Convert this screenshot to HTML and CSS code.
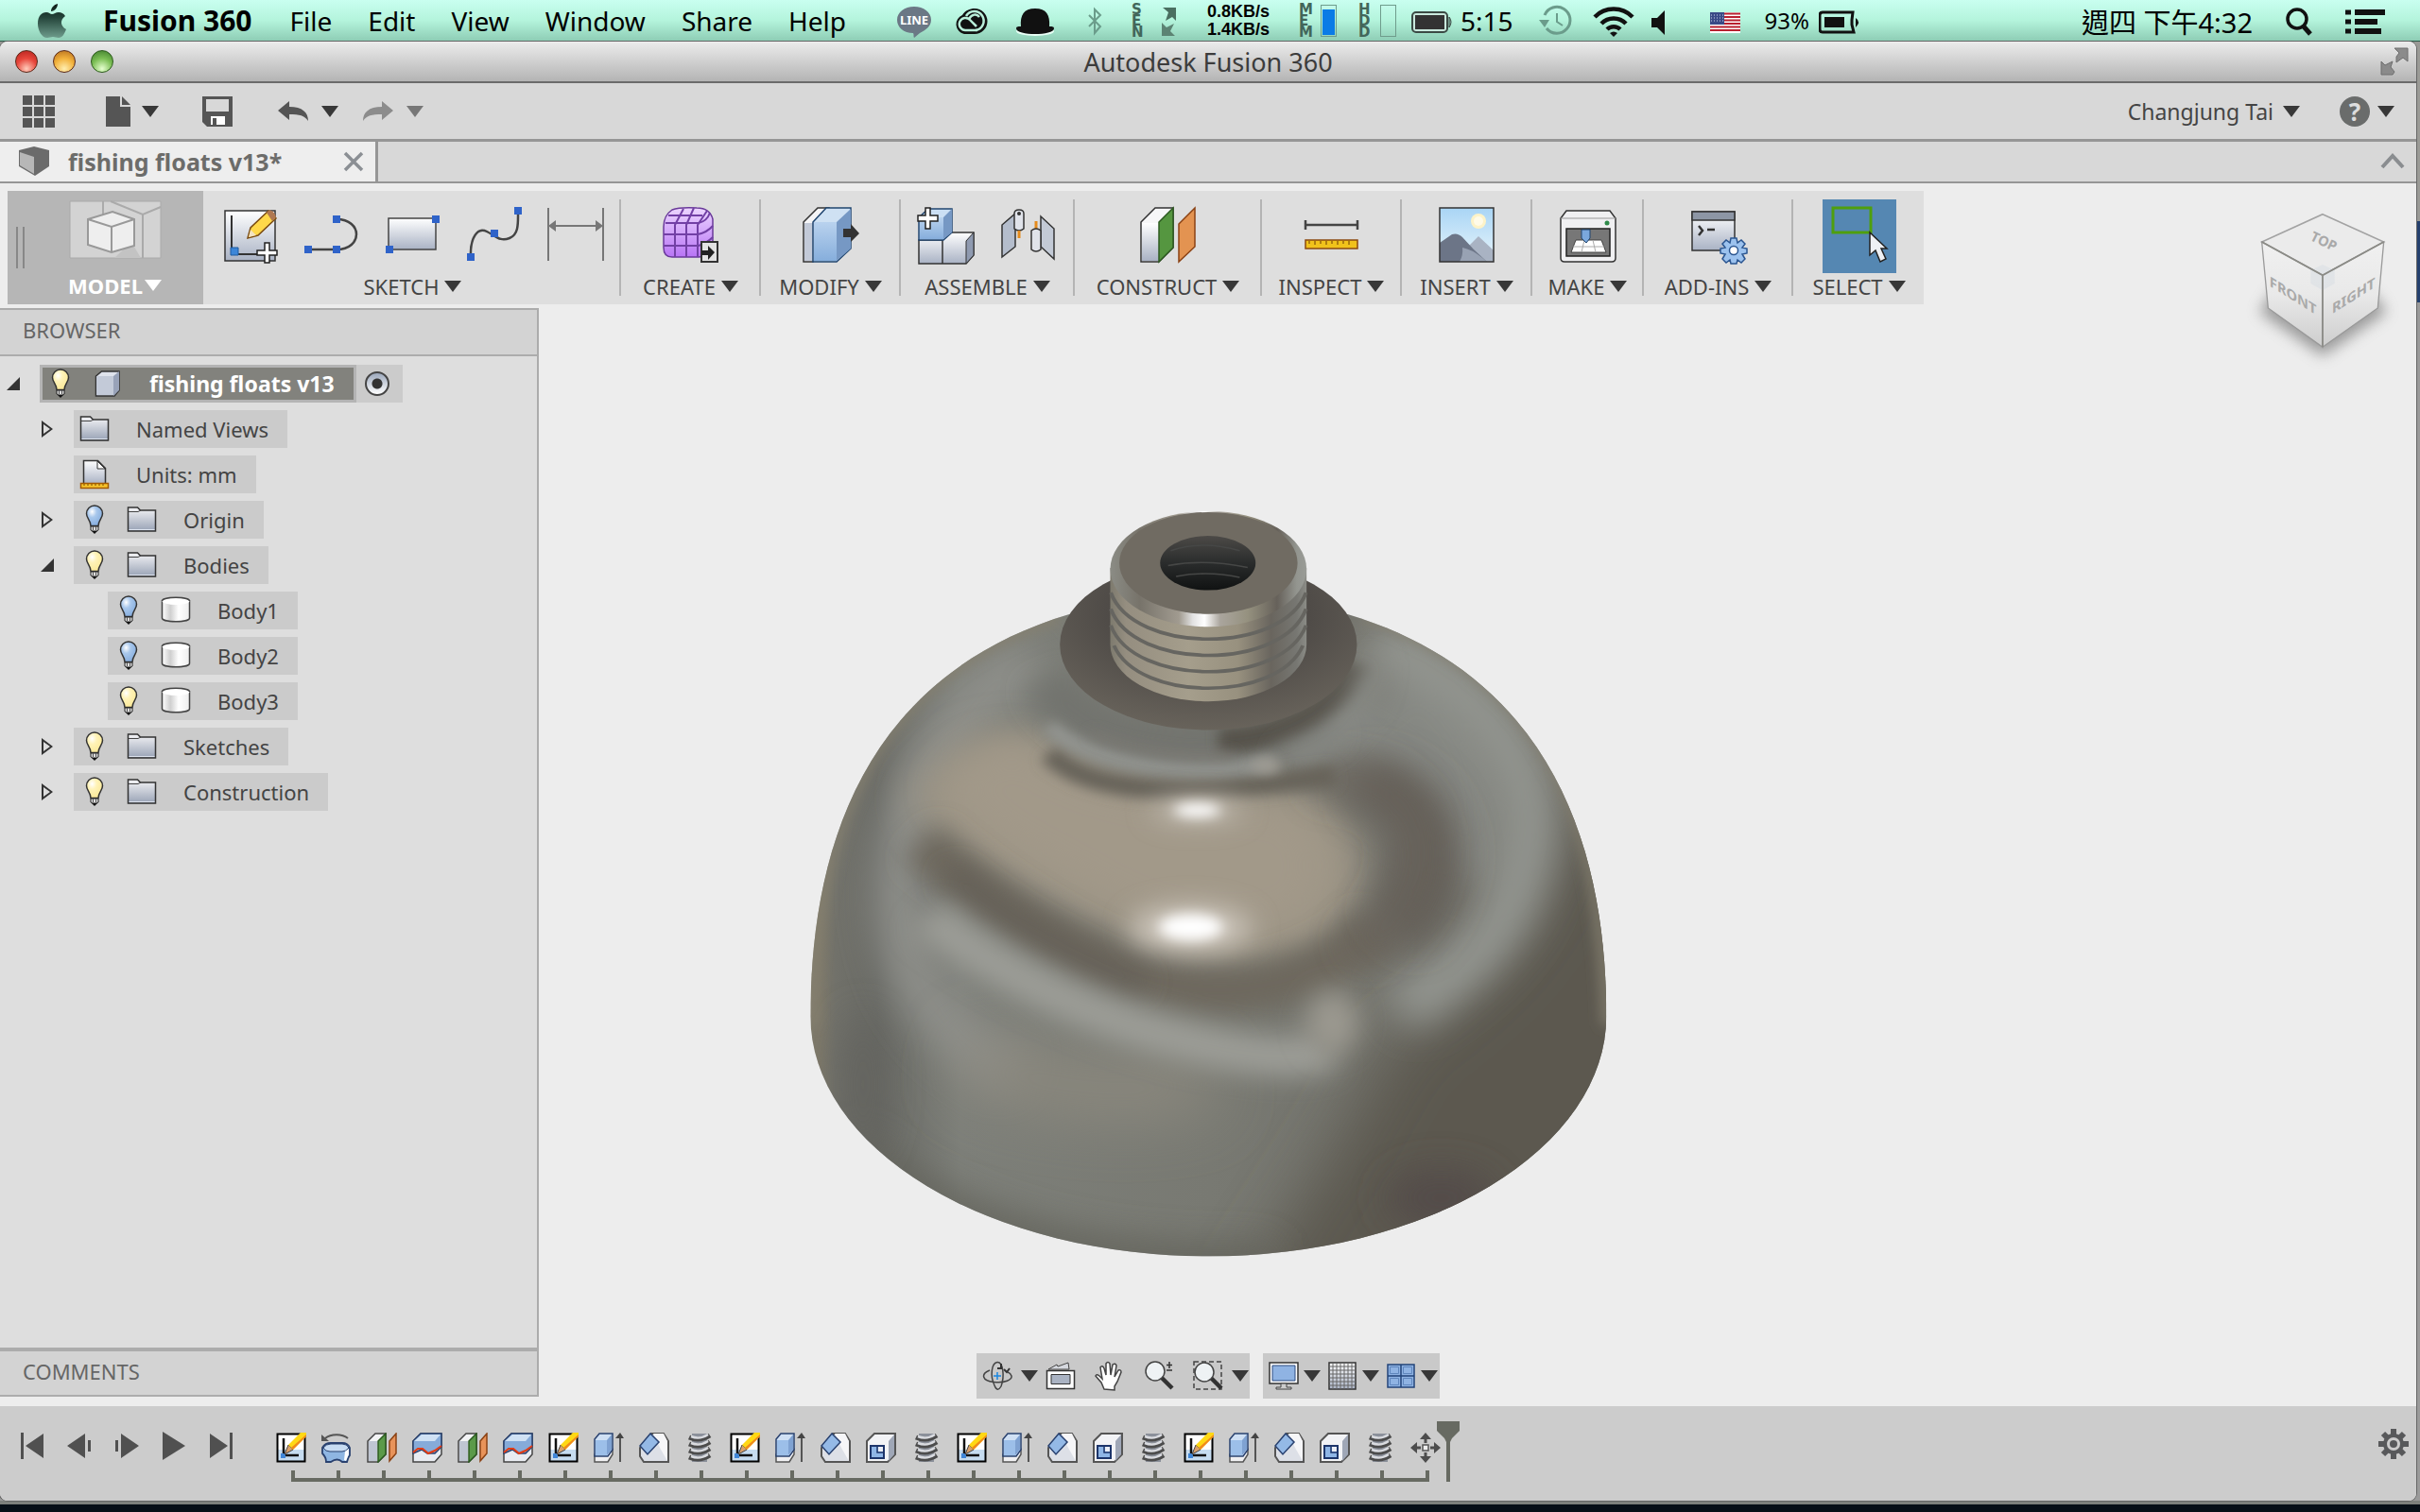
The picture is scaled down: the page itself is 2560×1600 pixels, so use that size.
FILE: index.html
```html
<!DOCTYPE html>
<html lang="en">
<head>
    <meta charset="UTF-8">
    <meta name="viewport" content="width=device-width, initial-scale=1.0">
    <title>Autodesk Fusion 360</title>
    <link rel="stylesheet" href="styles.css">
</head>
<body>

    <!-- shared icons -->
    <svg class="sprite" width="0" height="0" aria-hidden="true">
        <defs>
            <linearGradient id="steel" x1="0" y1="0" x2="0" y2="1"><stop offset="0" stop-color="#fff"/><stop offset="1" stop-color="#a9b2c4"/></linearGradient>
            <linearGradient id="folderFill" x1="0" y1="0" x2="0" y2="1"><stop offset="0" stop-color="#f4f4f6"/><stop offset="1" stop-color="#98a2b5"/></linearGradient>
            <linearGradient id="blue" x1="0" y1="0" x2="0" y2="1"><stop offset="0" stop-color="#b9d2ee"/><stop offset="1" stop-color="#86aedc"/></linearGradient>
            <linearGradient id="violet" x1="0" y1="0" x2="0" y2="1"><stop offset="0" stop-color="#ecd6ff"/><stop offset="1" stop-color="#b874f5"/></linearGradient>
            <linearGradient id="sky" x1="0" y1="0" x2="0" y2="1"><stop offset="0" stop-color="#a9d5f5"/><stop offset="1" stop-color="#e8f5fb"/></linearGradient>
            <linearGradient id="can" x1="0" y1="0" x2="1" y2="0"><stop offset="0" stop-color="#fff"/><stop offset=".3" stop-color="#cfcfcf"/><stop offset=".6" stop-color="#fff"/><stop offset="1" stop-color="#eee"/></linearGradient>
            <radialGradient id="bulbOn" cx=".35" cy=".3" r=".7"><stop offset="0" stop-color="#fff"/><stop offset=".4" stop-color="#fff3b8"/><stop offset="1" stop-color="#fbe999"/></radialGradient>
            <radialGradient id="bulbOff" cx=".35" cy=".3" r=".7"><stop offset="0" stop-color="#fff"/><stop offset=".4" stop-color="#a9c8ec"/><stop offset="1" stop-color="#87aede"/></radialGradient>
            <linearGradient id="appleFill" x1="0" y1="0" x2="0" y2="1"><stop offset="0" stop-color="#0c1a15"/><stop offset=".4" stop-color="#24443a"/><stop offset="1" stop-color="#6e9c8c"/></linearGradient>
        </defs>

        <symbol id="i-bulb-on" viewBox="0 0 20 32"><path d="M10 1a8.500 8.500 0 0 0-8.500 8.500c0 5 4.500 7 4.500 13h8c0-6 4.500-8 4.500-13A8.500 8.500 0 0 0 10 1z" fill="url(#bulbOn)" stroke="#333" stroke-width="1.500"/><path d="M6 23h8v4l-2 1h-4l-2-1z" fill="#ddd" stroke="#222"/><path d="M8.500 23v4M11.500 23v4" stroke="#555"/><path d="M7 28h6l-3 3z" fill="#111"/></symbol>
        <symbol id="i-bulb-off" viewBox="0 0 20 32"><path d="M10 1a8.500 8.500 0 0 0-8.500 8.500c0 5 4.500 7 4.500 13h8c0-6 4.500-8 4.500-13A8.500 8.500 0 0 0 10 1z" fill="url(#bulbOff)" stroke="#333" stroke-width="1.500"/><path d="M6 23h8v4l-2 1h-4l-2-1z" fill="#ddd" stroke="#222"/><path d="M8.500 23v4M11.500 23v4" stroke="#555"/><path d="M7 28h6l-3 3z" fill="#111"/></symbol>
        <symbol id="i-folder" viewBox="0 0 32 32"><path d="M1.500 28V3h10l3 3h16v22z" fill="url(#folderFill)" stroke="#333" stroke-width="1.500"/><path d="M2 7.500h10l3-1.500" fill="none" stroke="#444"/><path d="M2.500 26.500h27" stroke="#dde3ee"/></symbol>
        <symbol id="i-units" viewBox="0 0 32 32"><path d="M4.500 26V1.500h15l8 8V26z" fill="url(#steel)" stroke="#333" stroke-width="1.500"/><path d="M19 2v8h8z" fill="#fff" stroke="#333"/><path d="M1.500 25.500h29v5h-29z" fill="#f6c32b" stroke="#a35a00" stroke-width="1.500"/><path d="M5 26v2M9 26v2M13 26v2M17 26v2M21 26v2M25 26v2" stroke="#7a4a00"/></symbol>
        <symbol id="i-body" viewBox="0 0 32 32"><path d="M1.500 6v18c0 5 29 5 29 0V6z" fill="url(#can)" stroke="#444" stroke-width="1.500"/><ellipse cx="16" cy="6" rx="14.500" ry="4" fill="#fff"/><path d="M1.500 6c0-5 29-5 29 0" fill="none" stroke="#444" stroke-width="1.500"/></symbol>
        <symbol id="i-component" viewBox="0 0 32 32"><path d="M3.500 8l6-5h18.500v20l-5 6H3.500z" fill="#dfe3ec" stroke="#333" stroke-width="1.500"/><path d="M4 8h18v20H4z" fill="#c3cad8"/><path d="M22 8l6-5v20l-6 6z" fill="#98a2b8"/></symbol>

        <symbol id="i-fx-sketch" viewBox="0 0 32 32"><path d="M1.500 1.500h29v29h-29z" fill="#fff"/><path d="M2 18h28v12H2z" fill="#c6dcf0"/><path d="M1.500 1.500h29v29h-29z" fill="none" stroke="#000" stroke-width="2"/><path d="M8 6v18h16" fill="none" stroke="#111" stroke-width="2.500"/><path d="M5 22h5v5H5z" fill="#3f86d8"/><path d="M9 23l4-10 5 5z" fill="#d9a06a" stroke="#444"/><path d="M13 13L26 0h6v4L18 18z" fill="#ffd814"/><path d="M18 18L32 4v-2L16 16z" fill="#f08a1c"/></symbol>
        <symbol id="i-fx-revolve" viewBox="0 0 32 32"><path d="M4 6C10 1 22 1 28 6" fill="none" stroke="#555" stroke-width="2"/><path d="M0 2v7h8z" fill="#555"/><path d="M1 16q3-5 9-5h12q6 0 8 5v8q-2 2-3 7h-5q-5-5-12 0H5q0-5-4-9z" fill="#8fb6e2" stroke="#29416f" stroke-width="1.800"/><path d="M2 16q3-4 8-4h12q5 0 7 4-3 4-7 4H9q-5 0-7-4z" fill="#c7dcf3" stroke="#29416f"/><path d="M25 20l4-3v6l-3 7-2-1z" fill="#fff"/></symbol>
        <symbol id="i-fx-plane" viewBox="0 0 32 32"><path d="M1 9l8-8h11v22l-8 8H1z" fill="#f2f3f5" stroke="#444" stroke-width="1.500"/><path d="M2 9h9v21H2z" fill="#bfc6d2"/><path d="M12 9l8-8v22l-8 8z" fill="#5b9a49" stroke="#2b5a20" stroke-width="1.500"/><path d="M24 9l7-8v21l-7 8z" fill="#e8935a" stroke="#8b4214" stroke-width="1.500"/></symbol>
        <symbol id="i-fx-split" viewBox="0 0 32 32"><path d="M1 9l8-8h22v22l-7 8H1z" fill="#e9ecf2" stroke="#444" stroke-width="1.500"/><path d="M1 9l8-8h22v14l-7 7-8 0-6-4-9 4z" fill="#86abd9" stroke="#29416f" stroke-width="1.500"/><path d="M2 9l8-7h20l-6 7z" fill="#cfe1f4"/><path d="M1 21l5-4h5l6 5 7-3 7-5" fill="none" stroke="#e23b14" stroke-width="2"/></symbol>
        <symbol id="i-fx-extrude" viewBox="0 0 32 32"><path d="M1 23h14l5-5v5l-5 8H1z" fill="#f0f0f2" stroke="#555" stroke-width="1.500"/><path d="M1 7l5-6h14v17l-5 7H1z" fill="#cfe0f4" stroke="#29416f" stroke-width="1.500"/><path d="M2 8h12v16H2z" fill="#9cbfe9"/><path d="M14 8l5-6v16l-5 6z" fill="#7fa2d2"/><path d="M28 5v26" stroke="#555" stroke-width="2"/><path d="M23 6l5-6 4 6z" fill="#444"/></symbol>
        <symbol id="i-fx-chamfer" viewBox="0 0 32 32"><path d="M1 16L13 1h13l5 8v22H5l-4-6z" fill="#dde0e7" stroke="#555" stroke-width="2"/><path d="M15 1h11l4 8v21l-8-14z" fill="#f6f6f8"/><path d="M1 14L12 1l9 9L9 23z" fill="#94b9e6" stroke="#29416f" stroke-width="1.500"/></symbol>
        <symbol id="i-fx-thread" viewBox="0 0 32 32"><path d="M8 1h16v30H8z" fill="#8b909a"/><path d="M5 5q11 5 22-2M5 12q11 5 22-2M5 19q11 5 22-2M5 26q11 5 22-2" fill="none" stroke="#4c4c4c" stroke-width="5"/><path d="M7 4q9 4 18-2M7 11q9 4 18-2M7 18q9 4 18-2M7 25q9 4 18-2" fill="none" stroke="#d9dbe0" stroke-width="2.500"/></symbol>
        <symbol id="i-fx-shell" viewBox="0 0 32 32"><path d="M1 9l8-8h22v22l-8 8H1z" fill="#f2f3f6" stroke="#555" stroke-width="2"/><path d="M24 9l6-7v21l-6 7z" fill="#9fa7b7"/><path d="M5 14h14v13H5z" fill="#8fb6e6" stroke="#1d356b" stroke-width="2"/><path d="M12 14v7h7" fill="none" stroke="#1d356b" stroke-width="1.500"/><path d="M13 15h5v5h-5z" fill="#e9edf5"/></symbol>
        <symbol id="i-fx-move" viewBox="0 0 32 32"><g fill="#4d4d4d"><path d="M16 0l6 7H10zM16 32l6-7H10zM0 16l7-6v12zM32 16l-7-6v12z"/><path d="M14.500 6h3v5h-3zM14.500 21h3v5h-3zM6 14.500h5v3H6zM21 14.500h5v3h-5z"/></g><rect x="13" y="13" width="6" height="6" fill="#eee" stroke="#555" stroke-width="1.500"/></symbol>
    </svg>

    <header class="menubar">
        <nav class="menus">
            <button class="apple" aria-label="Apple menu"><svg width="32" height="36" viewBox="0 0 32 36"><path d="M22 0c0 4-3 8-7 8 0-4 3-7 7-8zM16 11c2 0 4-2 7-2s5 1 7 4c-6 4-5 11 1 14-2 5-4 9-8 9-2 0-4-1-6-1s-4 1-6 1C5 36 1 28 1 21c0-8 4-12 9-12 3 0 4 2 6 2z" fill="url(#appleFill)"/></svg></button>
            <button class="app-name">Fusion 360</button>
            <button>File</button>
            <button>Edit</button>
            <button>View</button>
            <button>Window</button>
            <button>Share</button>
            <button>Help</button>
        </nav>
        <div class="status">
            <svg width="60" height="40" viewBox="0 0 60 40"><path d="M26 5c10 0 18 6 18 14 0 7-6 11-12 14l-6 5c-1-2 0-3-1-5C15 33 8 27 8 19 8 11 16 5 26 5z" fill="#6b7885"/><text x="26" y="24" class="line-text">LINE</text></svg>
            <svg width="60" height="40" viewBox="0 0 60 40"><path d="M19 34a10.500 10.500 0 0 1-2-20C20 9 25 7 30 7a13.500 13.500 0 0 1 0 27z" fill="#111"/><g fill="none" stroke="#b9efda" stroke-width="2.500"><path d="M33 30h-13a6.500 6.500 0 1 1 5-11l7 7"/><path d="M21 15a10 10 0 1 1 10 15M24 18c3-5 8-6 11-2"/></g></svg>
            <svg width="70" height="40" viewBox="0 0 70 40"><ellipse cx="34" cy="31" rx="20" ry="5" fill="#e9fff6"/><path d="M14 28c0-2 3-2 5-2C18 14 22 7 34 7s16 7 15 19c2 0 5 0 5 2 0 8-40 8-40 0z" fill="#111"/></svg>
            <svg width="54" height="40" viewBox="0 0 54 40"><path d="M21 14l12 12-6 7V8l6 6-12 12" fill="none" stroke="#6b9c8b" stroke-width="2"/></svg>
            <span class="stack sen"><b>S</b><b>E</b><b>N</b></span>
            <svg width="56" height="40" viewBox="0 0 56 40"><path d="M9 6h14v14l-4-4-7 4 3-9z" fill="#4a6e60"/><path d="M8 36V22l5 5 8-4-4 8 5 5z" fill="#5c8373"/></svg>
            <span class="net"><b>0.8KB/s</b><b>1.4KB/s</b></span>
            <span class="stack"><b>M</b><b>E</b><b>M</b></span>
            <span class="meter"><i></i></span>
            <span class="stack"><b>H</b><b>D</b><b>D</b></span>
            <span class="meter empty"></span>
            <svg width="52" height="40" viewBox="0 0 52 40"><rect x="1" y="11" width="37" height="21" rx="4" fill="#c9e9dd" stroke="#3b4a44" stroke-width="2"/><rect x="4" y="14" width="31" height="15" fill="#333"/><path d="M40 16q4 5 0 11z" fill="#8cb5a6" stroke="#3b4a44"/></svg>
            <span>5:15</span>
            <svg width="84" height="40" viewBox="0 0 84 40"><path d="M33 14a14 14 0 1 1 2 14" fill="none" stroke="#6b9c8b" stroke-width="3"/><path d="M46 12v9l6 4" fill="none" stroke="#6b9c8b" stroke-width="2"/><path d="M27 19h11l-5 8z" fill="#6b9c8b"/></svg>
            <svg width="44" height="40" viewBox="0 0 44 40"><g fill="none" stroke="#111" stroke-width="4.500"><path d="M2 16a28 28 0 0 1 40 0M9 23a18 18 0 0 1 26 0M15 29a10 10 0 0 1 14 0"/></g><path d="M22 37l-4-4q4-3 8 0z" fill="#111"/></svg>
            <svg width="80" height="40" viewBox="0 0 80 40"><path d="M18 17h6l8-8v26l-8-8h-6z" fill="#111"/></svg>
            <svg width="58" height="40" viewBox="0 0 58 40"><path d="M0 11h32v22H0z" fill="#fff"/><path d="M0 12.500h32M0 16h32M0 19.500h32M0 23h32M0 26.500h32M0 30h32" stroke="#b8202f" stroke-width="1.900"/><path d="M0 11h15v13H0z" fill="#3a4a86"/><path d="M1 14h13M1 17h13M1 20h13" stroke="#cfd6ea" stroke-dasharray="1 2"/></svg>
            <span class="percent">93%</span>
            <svg class="battery" width="46" height="40" viewBox="0 0 46 40"><path d="M4 11h32l-1 8v5l2 8H4q-3 0-3-3V14q0-3 3-3z" fill="none" stroke="#111" stroke-width="3"/><path d="M6 16h21v11H6z" fill="#111"/><path d="M39 17q6 4 0 10z" fill="#111"/></svg>
            <span class="clock" lang="zh-Hant">週四 下午4:32</span>
            <svg width="64" height="40" viewBox="0 0 64 40"><circle cx="13" cy="18" r="10" fill="none" stroke="#111" stroke-width="3.500"/><path d="M19 25l8 9" stroke="#111" stroke-width="5"/></svg>
            <svg width="42" height="40" viewBox="0 0 42 40"><path d="M10 11h32M10 21h24M10 31h28" stroke="#111" stroke-width="6"/><path d="M0 11h6M0 21h6M0 31h6" stroke="#111" stroke-width="5"/></svg>
        </div>
    </header>

    <main class="window">
        <div class="titlebar">
            <div class="lights">
                <button class="light red" aria-label="Close"></button>
                <button class="light amber" aria-label="Minimize"></button>
                <button class="light green" aria-label="Zoom"></button>
            </div>
            <h1>Autodesk Fusion 360</h1>
            <button class="fullscreen" aria-label="Full screen"><svg width="30" height="30" viewBox="0 0 30 30"><path d="M15 1h14v14l-5-4-7 5 0-6 3-4zM1 29V15l4 4 8-4-2 6 4 5-2 3z" fill="#8b8b8b" stroke="#6e6e6e"/></svg></button>
        </div>

        <div class="appbar">
            <button class="grid-btn" aria-label="Data panel"><svg width="34" height="34" viewBox="0 0 34 34"><path d="M0 0h10v10H0zM12 0h10v10H12zM24 0h10v10H24zM0 12h10v10H0zM12 12h10v10H12zM24 12h10v10H24zM0 24h10v10H0zM12 24h10v10H12zM24 24h10v10H24z" fill="#555"/></svg></button>
            <button class="file-btn" aria-label="File"><svg width="26" height="32" viewBox="0 0 26 32"><path d="M0 0h15v11h11v21H0z" fill="#555"/><path d="M17 0l9 9h-9z" fill="#555"/></svg><span class="caret"></span></button>
            <button class="save-btn" aria-label="Save"><svg width="32" height="32" viewBox="0 0 32 32"><path d="M0 0h32v32H5l-5-5z" fill="#555"/><path d="M4 3h24v13H4z" fill="#d8d8d8"/><path d="M9 21h15v9H9z" fill="#fff"/><path d="M11 23h4v7h-4z" fill="#555"/></svg></button>
            <button class="undo-btn" aria-label="Undo"><svg width="34" height="24" viewBox="0 0 34 24"><path d="M0 11L12 1v6c14 0 20 6 20 15-4-6-9-7-20-7v6z" fill="#555"/></svg><span class="caret"></span></button>
            <button class="redo-btn" aria-label="Redo"><svg width="34" height="24" viewBox="0 0 34 24"><path d="M34 11L22 1v6C8 7 2 13 2 22c4-6 9-7 20-7v6z" fill="#8c8c8c"/></svg><span class="caret"></span></button>
            <button class="user-btn">Changjung Tai<span class="caret"></span></button>
            <button class="help-btn" aria-label="Help"><span class="help-mark">?</span><span class="caret"></span></button>
        </div>

        <div class="tabs">
            <div class="tab">
                <svg width="34" height="32" viewBox="0 0 34 32"><path d="M1 4L17 0l16 4v17L18 31 1 21z" fill="#6b6b6b"/><path d="M2 6l15 5v18L2 20z" fill="#b7b7b7"/></svg>
                <span>fishing floats v13*</span>
                <button aria-label="Close tab"><svg width="22" height="22" viewBox="0 0 22 22"><path d="M2 2l18 18M20 2L2 20" stroke="#8b8f94" stroke-width="3.500"/></svg></button>
            </div>
            <button class="collapse" aria-label="Collapse"><svg width="26" height="18" viewBox="0 0 26 18"><path d="M2 15L13 3l11 12" fill="none" stroke="#8a8d90" stroke-width="4"/></svg></button>
        </div>

        <section class="workspace">
            <!-- rendered part -->
            <svg class="model" width="880" height="820" viewBox="0 0 1568 1568" preserveAspectRatio="none" role="img" aria-label="fishing float">
                <defs>
                    <clipPath id="dome"><path d="M31 1063C31 760 110 380 520 248H1042C1452 380 1531 760 1531 1063A750 485 0 0 1 31 1063z"/></clipPath>
                    <filter id="b5" filterUnits="userSpaceOnUse" x="-200" y="-200" width="2000" height="2000"><feGaussianBlur stdDeviation="6"/></filter>
                    <filter id="b10" filterUnits="userSpaceOnUse" x="-200" y="-200" width="2000" height="2000"><feGaussianBlur stdDeviation="12"/></filter>
                    <filter id="b20" filterUnits="userSpaceOnUse" x="-200" y="-200" width="2000" height="2000"><feGaussianBlur stdDeviation="25"/></filter>
                    <filter id="b30" filterUnits="userSpaceOnUse" x="-200" y="-200" width="2000" height="2000"><feGaussianBlur stdDeviation="36"/></filter>
                    <filter id="b50" filterUnits="userSpaceOnUse" x="-200" y="-200" width="2000" height="2000"><feGaussianBlur stdDeviation="60"/></filter>
                    <linearGradient id="baseFill" x1="0" y1="0" x2="1" y2="0"><stop offset="0" stop-color="#7e7a6b"/><stop offset=".03" stop-color="#7d7869"/><stop offset=".05" stop-color="#71716a"/><stop offset=".1" stop-color="#686964"/><stop offset=".2" stop-color="#7d7f79"/><stop offset=".5" stop-color="#787972"/><stop offset="1" stop-color="#6c6a63"/></linearGradient>
                    <radialGradient id="collarFill" cx=".5" cy=".3" r=".7"><stop offset="0" stop-color="#3f3c3b"/><stop offset=".5" stop-color="#504c48"/><stop offset="1" stop-color="#68635b"/></radialGradient>
                    <linearGradient id="neckFill" x1="0" y1="0" x2="1" y2="0"><stop offset="0" stop-color="#7d7a6e"/><stop offset=".08" stop-color="#958e80"/><stop offset=".4" stop-color="#a59e8c"/><stop offset=".65" stop-color="#98917f"/><stop offset=".82" stop-color="#69655e"/><stop offset=".95" stop-color="#777772"/><stop offset="1" stop-color="#8b8c86"/></linearGradient>
                    <linearGradient id="bevelFill" x1="0" y1="0" x2="1" y2="0"><stop offset="0" stop-color="#8b8c85"/><stop offset=".15" stop-color="#77736a"/><stop offset=".35" stop-color="#a19b90"/><stop offset=".42" stop-color="#e2e2e2"/><stop offset=".48" stop-color="#fff"/><stop offset=".56" stop-color="#aaa59d"/><stop offset=".7" stop-color="#95917f"/><stop offset=".85" stop-color="#66615a"/><stop offset=".95" stop-color="#93958f"/><stop offset="1" stop-color="#9a9c97"/></linearGradient>
                    <linearGradient id="holeFill" x1="0" y1="0" x2="0" y2="1"><stop offset="0" stop-color="#4c4a47"/><stop offset=".5" stop-color="#2a2c2c"/><stop offset="1" stop-color="#101212"/></linearGradient>
                </defs>
                <g clip-path="url(#dome)">
                    <path d="M0 200h1568v1368H0z" fill="url(#baseFill)"/>
                    <path d="M1130 1120C1250 1020 1430 900 1470 600L1700 600V1700H800C880 1560 1020 1350 1130 1120z" fill="#5c5850" filter="url(#b50)"/>
                    <ellipse cx="1220" cy="1430" rx="100" ry="60" fill="#534b48" filter="url(#b30)"/>
                    <path d="M100 1320C300 1500 560 1570 900 1560" fill="none" stroke="#64635c" stroke-width="70" filter="url(#b30)"/>
                    <ellipse cx="130" cy="1200" rx="40" ry="150" fill="#64635e" filter="url(#b30)"/>
                    <path d="M450 340C290 430 190 640 200 850C210 990 280 1110 420 1180" fill="none" stroke="#8f908b" stroke-width="90" filter="url(#b30)"/>
                    <path d="M330 1150C480 1210 640 1230 780 1190" fill="none" stroke="#8b887e" stroke-width="120" filter="url(#b50)"/>
                    <path d="M960 520C1080 480 1150 430 1160 380C1320 480 1340 680 1280 800" fill="#858782" stroke="#858782" stroke-width="70" filter="url(#b30)"/>
                    <path d="M1090 300C1330 400 1425 600 1370 770C1345 890 1260 970 1140 1050" fill="none" stroke="#939590" stroke-width="105" filter="url(#b30)"/>
                    <path d="M1075 250C1452 390 1520 700 1533 1080" fill="none" stroke="#858070" stroke-width="18" filter="url(#b10)"/>
                    <path d="M31 1080C31 760 110 380 500 255" fill="none" stroke="#858070" stroke-width="22" filter="url(#b10)"/>
                    <path d="M220 620C280 490 420 460 480 500C580 600 760 600 950 600C1110 660 1110 850 980 930C840 980 700 960 560 880C420 800 280 760 220 620z" fill="#9c9485" filter="url(#b30)"/>
                    <path d="M280 600C350 500 420 490 470 530C600 620 780 630 930 630C1020 690 1030 800 950 870C800 920 640 870 540 800C440 740 340 700 280 600z" fill="#a29989" filter="url(#b30)"/>
                    <path d="M240 710C390 850 560 960 720 1000C860 1030 1010 980 1100 880" fill="none" stroke="#6d685d" stroke-width="92" filter="url(#b20)"/>
                    <path d="M290 770C400 870 540 950 660 1000" fill="none" stroke="#645e57" stroke-width="44" filter="url(#b20)"/>
                    <path d="M1060 590C1230 610 1230 790 1130 890" fill="none" stroke="#625d56" stroke-width="110" filter="url(#b30)"/>
                    <path d="M990 580C1100 570 1180 630 1175 740C1170 820 1130 880 1060 930" fill="none" stroke="#67625a" stroke-width="60" filter="url(#b30)"/>
                    <path d="M250 860C400 990 600 1080 750 1115C880 1150 970 1150 1010 1130" fill="none" stroke="#9c9d97" stroke-width="80" filter="url(#b20)"/>
                    <ellipse cx="1015" cy="1075" rx="50" ry="65" fill="#9b9990" filter="url(#b20)"/>
                    <path d="M480 380C540 520 800 560 1010 460" fill="none" stroke="#72736e" stroke-width="90" filter="url(#b20)"/>
                    <path d="M800 505C920 500 1030 440 1060 350" fill="none" stroke="#57524b" stroke-width="52" filter="url(#b10)"/>
                    <path d="M920 545C1030 510 1090 420 1085 340" fill="none" stroke="#8b8d88" stroke-width="38" filter="url(#b20)"/>
                    <path d="M480 530C560 610 700 620 1020 575" fill="none" stroke="#67635a" stroke-width="42" filter="url(#b10)"/>
                    <path d="M480 475C560 555 750 582 905 548" fill="none" stroke="#959894" stroke-width="26" filter="url(#b10)"/>
                    <ellipse cx="890" cy="555" rx="28" ry="14" fill="#a19d94" filter="url(#b10)"/>
                    <path d="M560 490C640 525 740 540 830 535" fill="none" stroke="#7b7973" stroke-width="14" filter="url(#b10)"/>
                    <ellipse cx="760" cy="645" rx="85" ry="24" fill="#c3bdb3" filter="url(#b20)"/>
                    <ellipse cx="760" cy="645" rx="44" ry="14" fill="#fff" filter="url(#b10)"/>
                    <ellipse cx="748" cy="884" rx="115" ry="48" fill="#cbc4ba" filter="url(#b20)"/>
                    <ellipse cx="748" cy="882" rx="60" ry="27" fill="#fff" filter="url(#b10)"/>
                </g>
                <ellipse cx="781" cy="310" rx="280" ry="173" fill="url(#collarFill)"/>
                <path d="M596 155V310A185 115 0 0 0 966 310V155z" fill="url(#neckFill)"/>
                <path d="M597 205C640 330 922 330 965 205M597 238C640 363 922 363 965 238M597 271C640 396 922 396 965 271M603 312C650 427 912 427 959 312" fill="none" stroke="#666560" stroke-width="7"/>
                <ellipse cx="781" cy="157" rx="185" ry="117" fill="url(#bevelFill)"/>
                <ellipse cx="781" cy="145" rx="168" ry="103" fill="#706b62"/>
                <ellipse cx="780" cy="145" rx="90" ry="55" fill="url(#holeFill)"/>
                <path d="M710 120q60-22 130 0M705 150q70-14 150 4M720 172q60-12 120 2" fill="none" stroke="#464746" stroke-width="3"/>
            </svg>

            <!-- orientation cube -->
            <svg class="viewcube" width="200" height="200" viewBox="0 0 600 600" role="img" aria-label="View cube">
                <defs>
                    <linearGradient id="cubeFace" x1="0" y1="0" x2="0" y2="1"><stop offset="0" stop-color="#f0f0f0"/><stop offset=".5" stop-color="#e9e9e9"/><stop offset="1" stop-color="#cdcdcd"/></linearGradient>
                    <filter id="cubeShadow" filterUnits="userSpaceOnUse" x="0" y="0" width="600" height="600"><feGaussianBlur stdDeviation="22"/></filter>
                </defs>
                <path d="M90 390L291 530L495 390L440 320H140z" fill="#777" opacity=".7" filter="url(#cubeShadow)"/>
                <path d="M291 80L485 168L291 274L98 168z" fill="#ebebeb" stroke="#a3a3a3" stroke-width="5"/>
                <path d="M98 168L291 274V502L118 378z" fill="url(#cubeFace)" stroke="#9a9a9a" stroke-width="4"/>
                <path d="M485 168L291 274V502L466 378z" fill="url(#cubeFace)" stroke="#9a9a9a" stroke-width="4"/>
                <path d="M291 240l38 18v42l-38 22-38-22v-42z" fill="#d3dae0" opacity=".4"/>
                <path d="M98 168L291 274L485 168M291 274V502" fill="none" stroke="#8b8b86" stroke-width="5"/>
                <text class="cube-text" transform="translate(288 180) rotate(26)">TOP</text>
                <text class="cube-text" transform="translate(197 354) skewY(32)">FRONT</text>
                <text class="cube-text" transform="translate(389 354) skewY(-32)">RIGHT</text>
            </svg>

            <div class="toolbar">
                <button class="model-menu">
                    <span class="grip"></span>
                    <svg width="98" height="62" viewBox="0 0 98 62"><path d="M1 1h96v60H1z" fill="#d3d3d3" stroke="#aaa"/><path d="M36 1v14M44 1l34 14 19-8M78 15v46" fill="none" stroke="#aaa" stroke-width="2"/><path d="M66 44l10 17H48z" fill="#c3c3c3"/><path d="M20 20l26-8 23 8v28l-24 7-25-8z" fill="#eee" stroke="#999" stroke-width="2"/><path d="M20 20l25 8 24-8M45 28v27" fill="none" stroke="#999" stroke-width="2"/></svg>
                    <span class="label">MODEL<span class="caret"></span></span>
                </button>
                <div class="group">
                    <div class="tools">
                        <button aria-label="Create sketch"><svg width="64" height="64" viewBox="0 0 64 64"><path d="M5 5h53v53H5z" fill="url(#steel)" stroke="#333" stroke-width="1.500"/><path d="M12 10v41h35" fill="none" stroke="#333" stroke-width="2"/><path d="M11 44h8v8h-8z" fill="#3c86d8" stroke="#1d5aa0"/><path d="M29 34l3-11L51 5l8 8-19 18z" fill="#ffd84a" stroke="#7a4a10" stroke-width="1.500"/><path d="M49 7l3-3q6 2 7 8l-4 4z" fill="#b07850"/><path d="M30 33l2-8 6 6z" fill="#f3e3c2"/><path d="M47 39h5v8h8v5h-8v8h-5v-8h-8v-5h8z" fill="#fff" stroke="#222" stroke-width="1.500"/></svg></button>
                        <button aria-label="Line"><svg width="64" height="64" viewBox="0 0 64 64"><path d="M6 46h31c28 0 28-32 0-32" fill="none" stroke="#444" stroke-width="2.500"/><path d="M3 42h8v8H3zM33 42h8v8h-8zM33 10h8v8h-8z" fill="#2f63c9"/></svg></button>
                        <button aria-label="Rectangle"><svg width="64" height="64" viewBox="0 0 64 64"><path d="M6 13h50v33H6z" fill="url(#steel)" stroke="#444" stroke-width="1.500"/><path d="M52 10h8v8h-8zM3 42h8v8H3z" fill="#2f63c9"/></svg></button>
                        <button aria-label="Spline"><svg width="64" height="64" viewBox="0 0 64 64"><path d="M7 54C6 34 14 22 24 27C34 32 38 38 48 34C58 30 57 18 57 6" fill="none" stroke="#444" stroke-width="2.500"/><path d="M3 50h8v8H3zM28 25h8v8h-8zM53 1h8v8h-8z" fill="#2f63c9"/></svg></button>
                        <button aria-label="Dimension"><svg width="64" height="64" viewBox="0 0 64 64"><path d="M3 2v56M61 2v56M5 21h54" stroke="#777" stroke-width="2"/><path d="M3 21l8-6v12zM61 21l-8-6v12z" fill="#777"/></svg></button>
                    </div>
                    <button class="label">SKETCH<span class="caret"></span></button>
                </div>
                <div class="group">
                    <div class="tools">
                        <button aria-label="Create form"><svg width="64" height="64" viewBox="0 0 64 64"><path d="M3 22Q3 10 12 4Q20 1 38 2Q52 2 55 14V40Q50 54 40 54H12Q3 54 3 44z" fill="url(#violet)" stroke="#6a3a9a" stroke-width="1.500"/><path d="M3 30h36q10-2 16-9M3 42h37q9-3 15-9M15 54V20l9-17M27 54V20l8-18M39 54V20l10-15M5 18h35q9-2 12-11M8 10h36" fill="none" stroke="#7240a5" stroke-width="2"/><path d="M43 38h17v21H43z" fill="#e3e3e3" stroke="#333" stroke-width="2"/><path d="M43 47h7v-5l7 7-7 8v-5h-7z" fill="#222"/></svg></button>
                    </div>
                    <button class="label">CREATE<span class="caret"></span></button>
                </div>
                <div class="group">
                    <div class="tools">
                        <button aria-label="Press pull"><svg width="64" height="64" viewBox="0 0 64 64"><path d="M3 17L18 2h12v42L13 59H3z" fill="#f5f5f7" stroke="#333" stroke-width="1.500"/><path d="M4 18h9v40H4z" fill="#c3cad8"/><path d="M13 17L27 2h26v43L38 59H13z" fill="#cfe1f3" stroke="#20456f" stroke-width="1.500"/><path d="M14 17h24v41H14z" fill="url(#blue)"/><path d="M38 17L53 3v42L38 58z" fill="#7698c4"/><path d="M45 24h8v-5l9 10-9 9v-5h-8z" fill="#333"/></svg></button>
                    </div>
                    <button class="label">MODIFY<span class="caret"></span></button>
                </div>
                <div class="group">
                    <div class="tools">
                        <button aria-label="New component"><svg width="64" height="64" viewBox="0 0 64 64"><path d="M2 36h25v25H2zM27 36l8-8h25v24l-8 9H27z" fill="url(#steel)" stroke="#333" stroke-width="1.500"/><path d="M52 37l8-9v24l-8 9z" fill="#8f9ab0" stroke="#333"/><path d="M2 12L12 3h25v25l-9 8H2z" fill="#cbdff4" stroke="#20456f" stroke-width="1.500"/><path d="M3 12h25v23H3z" fill="url(#blue)"/><path d="M28 12l9-9v25l-9 7z" fill="#7698c4"/><path d="M9 2h5v8h8v6h-8v8H9v-8H1v-6h8z" fill="#fff" stroke="#222" stroke-width="1.500"/></svg></button>
                        <button aria-label="Joint"><svg width="64" height="64" viewBox="0 0 64 64"><path d="M4 20L18 8v35L4 54z" fill="#b4bdcc" stroke="#333" stroke-width="1.500"/><path d="M17 8q0-4 5-4t5 4v16q-5 4-10 0z" fill="#e0e3ea" stroke="#333" stroke-width="1.500"/><circle cx="22" cy="8" r="2" fill="#333"/><path d="M22 26v8M40 16v12" stroke="#e58b1c" stroke-width="3"/><path d="M45 11l14 13v32L45 43z" fill="#c3cad6" stroke="#333" stroke-width="1.500"/><path d="M35 26q5-4 10 0v20q-5 4-10 0z" fill="#e0e3ea" stroke="#333" stroke-width="1.500"/></svg></button>
                    </div>
                    <button class="label">ASSEMBLE<span class="caret"></span></button>
                </div>
                <div class="group">
                    <div class="tools">
                        <button aria-label="Offset plane"><svg width="64" height="64" viewBox="0 0 64 64"><path d="M3 17L18 2h19v42L22 59H3z" fill="#f7f7f8" stroke="#333" stroke-width="1.500"/><path d="M4 18h18v40H4z" fill="url(#steel)"/><path d="M22 17L37 2v42L22 59z" fill="#559640" stroke="#2d5a20" stroke-width="1.500"/><path d="M43 19L60 2v41L43 59z" fill="#e39351" stroke="#8b4214" stroke-width="1.500"/></svg></button>
                    </div>
                    <button class="label">CONSTRUCT<span class="caret"></span></button>
                </div>
                <div class="group">
                    <div class="tools">
                        <button aria-label="Measure"><svg width="64" height="64" viewBox="0 0 64 64"><path d="M4 20h55M4 15v10M59 15v10" stroke="#444" stroke-width="2.500"/><path d="M4 36h55v9H4z" fill="#f1c21b" stroke="#8b4a10" stroke-width="1.500"/><path d="M8 37v3M14 37v4M20 37v3M26 37v4M32 37v3M38 37v4M44 37v3M50 37v4" stroke="#6b3a05"/></svg></button>
                    </div>
                    <button class="label">INSPECT<span class="caret"></span></button>
                </div>
                <div class="group">
                    <div class="tools">
                        <button aria-label="Insert image"><svg width="64" height="64" viewBox="0 0 64 64"><path d="M3 2h57v57H3z" fill="url(#sky)"/><circle cx="44" cy="16" r="8" fill="#fdf3c8"/><circle cx="44" cy="16" r="5" fill="#fffbe8"/><path d="M30 46l14-14 16 15v12H34z" fill="#a9b3c3"/><path d="M3 39l13-9q6-2 11 3l12 13 14 13H3z" fill="#6c7587"/><path d="M27 44q10 2 20 10l6 5H24q4-7 3-15z" fill="#98a2b3"/><path d="M3 2h57v57H3z" fill="none" stroke="#333" stroke-width="1.500"/></svg></button>
                    </div>
                    <button class="label">INSERT<span class="caret"></span></button>
                </div>
                <div class="group">
                    <div class="tools">
                        <button aria-label="3D print"><svg width="64" height="64" viewBox="0 0 64 64"><path d="M3 13l6-8h46l6 8v42q0 4-4 4H7q-4 0-4-4z" fill="#f0f0f2" stroke="#333" stroke-width="1.500"/><path d="M3 13h58" stroke="#999"/><circle cx="52" cy="18" r="2.500" fill="#2f8a4a"/><path d="M9 24h46v29H9z" fill="#777" stroke="#222" stroke-width="1.500"/><path d="M19 36h27l5 13H14z" fill="#fff" stroke="#444"/><path d="M28 36l-3 13M37 36l3 13M16 43h33" stroke="#aaa"/><path d="M25 25h9v9l-4 5-5-5z" fill="#7aa7dc" stroke="#20456f"/></svg></button>
                    </div>
                    <button class="label">MAKE<span class="caret"></span></button>
                </div>
                <div class="group">
                    <div class="tools">
                        <button aria-label="Scripts and add-ins"><svg width="64" height="64" viewBox="0 0 64 64"><path d="M4 6h45v41H4z" fill="url(#steel)" stroke="#333" stroke-width="1.500"/><path d="M4 6h45v9H4z" fill="#8d96a5" stroke="#333" stroke-width="1.500"/><path d="M11 21l4 5-4 5M20 25h8" fill="none" stroke="#333" stroke-width="2.500"/><g fill="#9cc2ee" stroke="#2a5590" stroke-width="1.500"><path d="M45 34h6l1 5 4-3 4 4-3 4 5 1v5l-5 1 3 5-4 4-4-3-1 4h-6l-1-4-4 3-4-4 3-5-5-1v-5l5-1-3-4 4-4 4 3z"/><circle cx="48" cy="47" r="4.500" fill="#fff"/></g></svg></button>
                    </div>
                    <button class="label">ADD-INS<span class="caret"></span></button>
                </div>
                <div class="group">
                    <div class="tools">
                        <button class="active" aria-label="Select"><svg width="78" height="78" viewBox="0 0 78 78"><path d="M11 9h40v26H11z" fill="none" stroke="#4f9f0d" stroke-width="3"/><path d="M50 35v24l6-5 5 12 6-3-5-11h6z" fill="#eef0f4" stroke="#222" stroke-width="1.500"/></svg></button>
                    </div>
                    <button class="label">SELECT<span class="caret"></span></button>
                </div>
            </div>

            <aside class="browser">
                <h2>BROWSER</h2>
                <ul class="tree">
                    <li class="lv0"><span class="twist open"></span><div class="node selected"><svg class="bulb"><use href="#i-bulb-on"/></svg><svg class="pic"><use href="#i-component"/></svg><span>fishing floats v13</span></div><label class="activate"><input type="radio" checked aria-label="Activate component"></label></li>
                    <li class="lv1"><span class="twist"></span><div class="node"><svg class="pic"><use href="#i-folder"/></svg><span>Named Views</span></div></li>
                    <li class="lv1"><span class="twist none"></span><div class="node"><svg class="pic"><use href="#i-units"/></svg><span>Units: mm</span></div></li>
                    <li class="lv1"><span class="twist"></span><div class="node"><svg class="bulb"><use href="#i-bulb-off"/></svg><svg class="pic"><use href="#i-folder"/></svg><span>Origin</span></div></li>
                    <li class="lv1"><span class="twist open"></span><div class="node"><svg class="bulb"><use href="#i-bulb-on"/></svg><svg class="pic"><use href="#i-folder"/></svg><span>Bodies</span></div></li>
                    <li class="lv2"><span class="twist none"></span><div class="node"><svg class="bulb"><use href="#i-bulb-off"/></svg><svg class="pic"><use href="#i-body"/></svg><span>Body1</span></div></li>
                    <li class="lv2"><span class="twist none"></span><div class="node"><svg class="bulb"><use href="#i-bulb-off"/></svg><svg class="pic"><use href="#i-body"/></svg><span>Body2</span></div></li>
                    <li class="lv2"><span class="twist none"></span><div class="node"><svg class="bulb"><use href="#i-bulb-on"/></svg><svg class="pic"><use href="#i-body"/></svg><span>Body3</span></div></li>
                    <li class="lv1"><span class="twist"></span><div class="node"><svg class="bulb"><use href="#i-bulb-on"/></svg><svg class="pic"><use href="#i-folder"/></svg><span>Sketches</span></div></li>
                    <li class="lv1"><span class="twist"></span><div class="node"><svg class="bulb"><use href="#i-bulb-on"/></svg><svg class="pic"><use href="#i-folder"/></svg><span>Construction</span></div></li>
                </ul>
                <h2 class="comments">COMMENTS</h2>
            </aside>

            <div class="navbar">
                <div class="nav-group">
                    <button aria-label="Orbit"><svg width="32" height="32" viewBox="0 0 32 32"><path d="M13 26C8 16 10 2 16 1.500C22 1 24 16 20 27Q16 34 13 26z" fill="none" stroke="#444" stroke-width="1.500"/><path d="M8 10C-2 14 0 21 12 22.500C24 24 32 20 31 16Q30 13 27 12" fill="none" stroke="#444" stroke-width="1.500"/><path d="M16 12v8M12 16h8" stroke="#1a86e0" stroke-width="1.500"/><path d="M20 3v5h-4M29 8l-3 4-3-3" fill="none" stroke="#333" stroke-width="2"/></svg><span class="caret"></span></button>
                    <button aria-label="Look at"><svg width="32" height="32" viewBox="0 0 32 32"><path d="M3 9l9-5 1 2 11-4 1 7z" fill="#d5d8de" stroke="#444"/><path d="M1.500 10.500h29v19h-29z" fill="#fff" stroke="#333" stroke-width="1.500"/><path d="M6 14.500h20v10H6z" fill="#aab3c3" stroke="#333"/></svg></button>
                    <button aria-label="Pan"><svg width="32" height="32" viewBox="0 0 32 32"><path d="M10 30L7 23 1 16q1-3 5 1l2 2L6 7q2-3 4 1l2 7V3q2-3 4 0l1 12 2-11q3-2 4 1l-2 12 4-7q3-1 3 2l-4 10-3 5v4z" fill="#fff" stroke="#444" stroke-width="1.500"/></svg></button>
                    <button aria-label="Zoom"><svg width="32" height="32" viewBox="0 0 32 32"><path d="M18 17l12 12" stroke="#333" stroke-width="4.500"/><circle cx="12" cy="11" r="10" fill="#eef2f4" stroke="#444" stroke-width="1.500"/><path d="M27 1v7M24 4.500h6M24 10h6" stroke="#333" stroke-width="1.500"/></svg></button>
                    <button aria-label="Fit"><svg width="32" height="32" viewBox="0 0 32 32"><path d="M1 1h29v29H1z" fill="none" stroke="#444" stroke-width="1.500" stroke-dasharray="5 3"/><path d="M18 17l12 12" stroke="#333" stroke-width="4.500"/><circle cx="12" cy="12" r="10" fill="#eef2f4" stroke="#444" stroke-width="1.500"/></svg><span class="caret"></span></button>
                </div>
                <div class="nav-group views">
                    <button aria-label="Display settings"><svg width="32" height="32" viewBox="0 0 32 32"><path d="M1 2h30v22H1z" fill="#fff" stroke="#333" stroke-width="1.500"/><path d="M4 5h24v16H4z" fill="#8fb3e3" stroke="#2a4a80"/><path d="M13 24h6v4h5v2H8v-2h5z" fill="#ccc" stroke="#444"/></svg><span class="caret"></span></button>
                    <button aria-label="Grid and snaps"><svg width="32" height="32" viewBox="0 0 32 32"><path d="M2 2h28v28H2z" fill="url(#steel)" stroke="#333" stroke-width="1.500"/><path d="M6 2v28M10 2v28M14 2v28M18 2v28M22 2v28M26 2v28M2 6h28M2 10h28M2 14h28M2 18h28M2 22h28M2 26h28" stroke="#666"/></svg><span class="caret"></span></button>
                    <button aria-label="Viewports"><svg width="32" height="32" viewBox="0 0 32 32"><path d="M2 4h14v12H2zM16 4h14v12H16zM2 16h14v12H2zM16 16h14v12H16z" fill="#8fb3e3" stroke="#23447a" stroke-width="1.500"/><path d="M4.500 6.500h9v7h-9zM18.500 6.500h9v7h-9zM4.500 18.500h9v7h-9zM18.500 18.500h9v7h-9z" fill="none" stroke="#5f86bd"/></svg><span class="caret"></span></button>
                </div>
            </div>
        </section>

        <footer class="timeline">
            <div class="player">
                <button aria-label="Go to start"><svg width="28" height="32" viewBox="0 0 28 32"><path d="M2 2h3v28H2zM26 3v26L7 16z" fill="#505050"/></svg></button>
                <button aria-label="Step back"><svg width="28" height="32" viewBox="0 0 28 32"><path d="M20 3v26L1 16zM23 10h3v12h-3z" fill="#505050"/></svg></button>
                <button aria-label="Step forward"><svg width="28" height="32" viewBox="0 0 28 32"><path d="M8 3v26l19-13zM2 10h3v12H2z" fill="#505050"/></svg></button>
                <button aria-label="Play"><svg width="28" height="32" viewBox="0 0 28 32"><path d="M2 1v30l24-15z" fill="#505050"/></svg></button>
                <button aria-label="Go to end"><svg width="28" height="32" viewBox="0 0 28 32"><path d="M2 3v26l19-13zM23 2h3v28h-3z" fill="#505050"/></svg></button>
            </div>
            <ol class="features">
                <li><svg><use href="#i-fx-sketch"/></svg></li>
                <li><svg><use href="#i-fx-revolve"/></svg></li>
                <li><svg><use href="#i-fx-plane"/></svg></li>
                <li><svg><use href="#i-fx-split"/></svg></li>
                <li><svg><use href="#i-fx-plane"/></svg></li>
                <li><svg><use href="#i-fx-split"/></svg></li>
                <li><svg><use href="#i-fx-sketch"/></svg></li>
                <li><svg><use href="#i-fx-extrude"/></svg></li>
                <li><svg><use href="#i-fx-chamfer"/></svg></li>
                <li><svg><use href="#i-fx-thread"/></svg></li>
                <li><svg><use href="#i-fx-sketch"/></svg></li>
                <li><svg><use href="#i-fx-extrude"/></svg></li>
                <li><svg><use href="#i-fx-chamfer"/></svg></li>
                <li><svg><use href="#i-fx-shell"/></svg></li>
                <li><svg><use href="#i-fx-thread"/></svg></li>
                <li><svg><use href="#i-fx-sketch"/></svg></li>
                <li><svg><use href="#i-fx-extrude"/></svg></li>
                <li><svg><use href="#i-fx-chamfer"/></svg></li>
                <li><svg><use href="#i-fx-shell"/></svg></li>
                <li><svg><use href="#i-fx-thread"/></svg></li>
                <li><svg><use href="#i-fx-sketch"/></svg></li>
                <li><svg><use href="#i-fx-extrude"/></svg></li>
                <li><svg><use href="#i-fx-chamfer"/></svg></li>
                <li><svg><use href="#i-fx-shell"/></svg></li>
                <li><svg><use href="#i-fx-thread"/></svg></li>
                <li><svg><use href="#i-fx-move"/></svg></li>
            </ol>
            <svg class="marker" width="24" height="64" viewBox="0 0 24 64"><path d="M0 0h24v10l-8 8-2 4v42h-4V22l-2-4-8-8z" fill="#676a62"/></svg>
            <button class="settings" aria-label="Timeline settings"><svg width="32" height="32" viewBox="0 0 32 32"><g stroke="#58595b" stroke-width="6"><path d="M16 0v32M0 16h32M5 5l22 22M27 5L5 27"/></g><circle cx="16" cy="16" r="11" fill="#58595b"/><circle cx="16" cy="16" r="7" fill="#ccc"/><circle cx="16" cy="16" r="4" fill="#58595b"/></svg></button>
        </footer>
    </main>

</body>
</html>
```

FILE: styles.css
```css
* {
    box-sizing: border-box;
}
body {
    margin: 0;
    height: 100vh;
    display: flex;
    flex-direction: column;
    overflow: hidden;
    background: linear-gradient(#9a9a96 0 234px, #24406e 234px 320px, #9a9a9a 320px calc(100% - 12px), #7d807c calc(100% - 12px) calc(100% - 8px), #070f17 calc(100% - 8px));
    font-family: "Noto Sans", "Noto Sans CJK TC", sans-serif;
    font-size: 22px;
    color: #444;
}
button {
    font: inherit;
    color: inherit;
    background: none;
    border: none;
    padding: 0;
    display: flex;
    align-items: center;
}
svg {
    display: block;
    flex: none;
}
.sprite {
    position: absolute;
}
.caret {
    flex: none;
    width: 0;
    border: 9px solid transparent;
    border-top: 12px solid #383838;
    border-bottom: none;
}

/* system menu bar */
.menubar {
    flex: none;
    height: 44px;
    padding: 0 37px 0 39px;
    display: flex;
    align-items: center;
    justify-content: space-between;
    background: linear-gradient(#c9fff0, #b4f4dc 50%, #8ecdb5);
    border-bottom: 1px solid #2f5c4c;
    color: #000;
    font-size: 28px;
}
.menus {
    display: flex;
    align-items: center;
    gap: 38px;
}
.app-name {
    margin-right: 2px;
    font-size: 30px;
    font-weight: bold;
}
.status {
    display: flex;
    align-items: center;
    white-space: nowrap;
}
.line-text {
    font: bold 13px "Noto Sans", sans-serif;
    fill: #fff;
    text-anchor: middle;
}
.stack {
    display: flex;
    flex-direction: column;
    width: 23px;
    font: bold 15px/12px "DejaVu Sans", sans-serif;
    color: #42665a;
}
.sen {
    width: 24px;
    margin-left: 12px;
}
.net {
    display: flex;
    flex-direction: column;
    width: 97px;
    font: bold 18px/19px "Liberation Sans", sans-serif;
}
.meter {
    width: 17px;
    height: 34px;
    margin-right: 23px;
    padding: 4px 1px 1px;
    border: 1px solid #6f9c8c;
}
.meter i {
    display: block;
    height: 100%;
    background: #0a7be6;
}
.empty {
    margin-right: 16px;
}
.percent {
    font-size: 24px;
}
.battery {
    margin-left: 10px;
    margin-right: 232px;
}
.clock {
    margin-right: 34px;
    font-size: 29px;
}

/* window */
.window {
    flex: 1;
    min-height: 0;
    margin: 0 4px 12px 0;
    display: flex;
    flex-direction: column;
    background: #ededed;
    border-radius: 8px;
    overflow: hidden;
    box-shadow: 0 0 0 1px #666;
}
.titlebar {
    flex: none;
    height: 44px;
    padding: 0 8px;
    display: grid;
    grid-template-columns: 1fr auto 1fr;
    align-items: center;
    background: linear-gradient(#ececec, #b4b4b4);
    border-bottom: 2px solid #6b6b6b;
}
.titlebar h1 {
    margin: 0;
    font-size: 27px;
    font-weight: normal;
    color: #3c3c3c;
}
.lights {
    display: flex;
    gap: 16px;
    padding-left: 8px;
}
.light {
    width: 24px;
    height: 24px;
    border-radius: 50%;
    border: 1px solid #5a2a1a;
}
.red {
    background: radial-gradient(circle at 50% 85%, #fcb, #e8473c 50%, #b3201c);
}
.amber {
    background: radial-gradient(circle at 50% 85%, #ffeeb0, #f2b23c 50%, #b36a1c);
}
.green {
    background: radial-gradient(circle at 50% 85%, #e6ffd0, #7cbf55 50%, #3d7a2a);
    border-color: #2c5a1c;
}
.fullscreen {
    justify-self: end;
}

.appbar {
    flex: none;
    height: 62px;
    padding: 0 23px 0 24px;
    display: flex;
    align-items: center;
    background: #d8d8d8;
    border-bottom: 3px solid #969696;
}
.appbar button {
    gap: 12px;
}
.appbar .file-btn {
    margin-left: 54px;
}
.appbar .save-btn {
    margin-left: 46px;
}
.appbar .undo-btn {
    margin-left: 48px;
}
.appbar .redo-btn {
    margin-left: 24px;
    gap: 14px;
}
.redo-btn .caret {
    border-top-color: #777;
}
.appbar .user-btn {
    margin-left: auto;
    font-size: 23px;
    gap: 10px;
}
.appbar .help-btn {
    margin-left: 42px;
    gap: 8px;
}
.help-mark {
    width: 32px;
    height: 32px;
    border-radius: 50%;
    background: #6a6c6b;
    color: #ddd;
    font-size: 26px;
    font-weight: bold;
    line-height: 32px;
    text-align: center;
}

.tabs {
    flex: none;
    height: 44px;
    padding-right: 12px;
    display: flex;
    align-items: center;
    justify-content: space-between;
    background: #d8d8d8;
    border-bottom: 2px solid #969696;
}
.tab {
    height: 42px;
    width: 400px;
    padding: 0 12px 0 19px;
    display: flex;
    align-items: center;
    gap: 19px;
    background: #eee;
    border-right: 3px solid #969696;
    font-size: 25px;
    font-weight: bold;
    color: #6c6c6a;
}
.tab button {
    margin-left: auto;
}

/* canvas */
.workspace {
    flex: 1;
    min-height: 0;
    position: relative;
    padding: 8px 0 10px;
    display: flex;
    flex-direction: column;
    align-items: flex-start;
    gap: 4px;
}
.model {
    position: absolute;
    top: 326px;
    left: calc(50% - 438px);
}
.viewcube {
    position: absolute;
    top: 6px;
    right: -4px;
}
.cube-text {
    font: bold 44px "Noto Sans", sans-serif;
    fill: #a9a9a9;
    text-anchor: middle;
}

.toolbar {
    position: relative;
    height: 120px;
    margin-left: 8px;
    display: grid;
    grid-template-columns: 207px 440px 148px 148px 184px 198px 148px 138px 118px 158px 140px;
    background: #dedede;
}
.model-menu {
    position: relative;
    padding: 10px 0 0 20px;
    flex-direction: column;
    justify-content: flex-start;
    background: #b6b6b6;
}
.grip {
    position: absolute;
    left: 9px;
    top: 38px;
    width: 9px;
    height: 44px;
    border: solid #888;
    border-width: 0 2px;
}
.label {
    display: flex;
    align-items: center;
    gap: 6px;
    height: 28px;
    line-height: 28px;
}
.model-menu .label {
    margin-top: 14px;
    font-weight: bold;
    color: #fff;
    gap: 2px;
}
.model-menu .caret {
    border-top-color: #fff;
}
.group {
    position: relative;
    padding: 9px 0 0 3px;
    display: flex;
    flex-direction: column;
    align-items: center;
}
.group + .group::before {
    content: "";
    position: absolute;
    left: 0;
    top: 9px;
    height: 102px;
    border-left: 2px solid #b4b4b4;
}
.tools {
    display: flex;
    align-items: center;
    gap: 22px;
    height: 78px;
}
.active {
    background: #5587b2;
}

.browser {
    position: relative;
    flex: 1;
    width: 570px;
    display: flex;
    flex-direction: column;
    background: #dedede;
    border: 2px solid #acacac;
    border-left: none;
}
.browser h2 {
    margin: 0;
    height: 49px;
    padding-left: 24px;
    line-height: 43px;
    font-size: 22px;
    font-weight: normal;
    color: #666;
    background: #d3d3d3;
    border-bottom: 2px solid #acacac;
}
.browser .comments {
    height: 50px;
    border-top: 4px solid #acacac;
    border-bottom: none;
}
.tree {
    flex: 1;
    margin: 0;
    padding: 9px 0 0;
    list-style: none;
    display: flex;
    flex-direction: column;
    gap: 8px;
}
.tree li {
    display: flex;
    align-items: center;
    height: 40px;
}
.lv0 {
    padding-left: 6px;
}
.lv1 {
    padding-left: 42px;
}
.lv2 {
    padding-left: 78px;
}
.twist {
    width: 36px;
    height: 18px;
    flex: none;
    background: #333;
    clip-path: polygon(2px 0, 14px 9px, 2px 18px, 2px 0, 4px 4px, 4px 14px, 11px 9px, 4px 4px);
}
.open {
    height: 14px;
    clip-path: polygon(1px 14px, 15px 0, 15px 14px);
}
.none {
    visibility: hidden;
}
.node {
    height: 40px;
    padding: 0 20px 0 6px;
    display: flex;
    align-items: center;
    background: #cbcbcb;
}
.bulb {
    width: 20px;
    height: 32px;
    margin: 0 24px 0 6px;
}
.pic {
    width: 32px;
    height: 32px;
    margin-right: 28px;
}
.selected {
    padding: 0 20px 0 3px;
    background: #82827d;
    border: 3px solid #b4b4b4;
    color: #fff;
    font-size: 23px;
    font-weight: bold;
}
.activate {
    height: 40px;
    padding: 0 14px 0 9px;
    display: flex;
    align-items: center;
    background: #cbcbcb;
}
.activate input {
    appearance: none;
    width: 26px;
    height: 26px;
    margin: 0;
    border: 2px solid #444;
    border-radius: 50%;
    background: radial-gradient(circle, #333 5px, transparent 6px), linear-gradient(#9ca8bc, #fff);
}

.navbar {
    position: absolute;
    left: 0;
    right: 0;
    bottom: 8px;
    display: flex;
    justify-content: center;
    gap: 14px;
}
.nav-group {
    height: 48px;
    padding: 0 1px 0 6px;
    display: flex;
    align-items: center;
    gap: 20px;
    background: #c9c9c9;
}
.nav-group button {
    gap: 9px;
}
.nav-group button:first-child {
    margin-right: -12px;
}
.nav-group.views {
    padding-right: 2px;
    gap: 7px;
}
.views button,
.views button:first-child {
    margin: 0;
    gap: 5px;
}

/* timeline */
.timeline {
    flex: none;
    height: 100px;
    padding: 16px 8px 0 20px;
    display: flex;
    align-items: flex-start;
    background: #ccc;
}
.player {
    padding-top: 10px;
    display: flex;
    gap: 22px;
}
.features {
    margin: 12px 0 0 36px;
    padding: 0;
    list-style: none;
    display: flex;
}
.features li {
    width: 48px;
    height: 52px;
    padding-left: 8px;
    background:
        linear-gradient(#676a62, #676a62) 24px 40px / 4px 12px no-repeat,
        linear-gradient(#676a62, #676a62) 0 48px / 48px 4px no-repeat;
}
.features li:first-child {
    background-position: 24px 40px, 24px 48px;
}
.features li:last-child {
    background-size: 4px 12px, 28px 4px;
}
.features svg {
    width: 32px;
    height: 32px;
}
.marker {
    margin-left: -12px;
}
.settings {
    margin: 8px 0 0 auto;
}
```
